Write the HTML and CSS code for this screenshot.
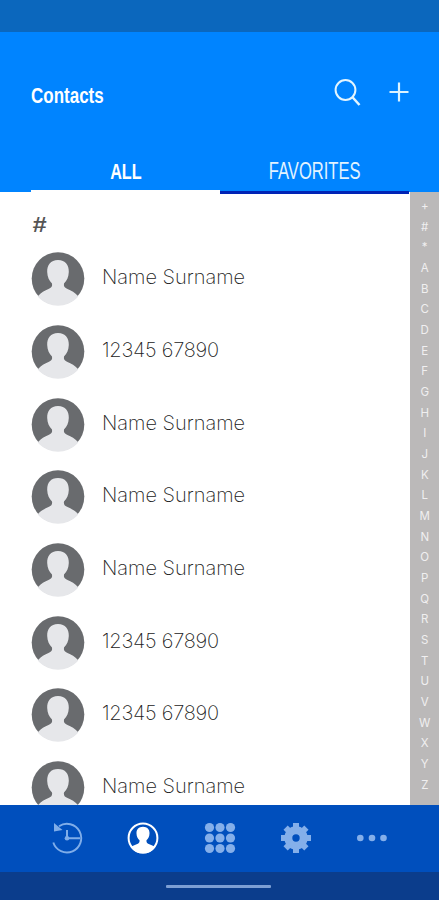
FILE: index.html
```
<!DOCTYPE html>
<html lang="en">
<head>
<meta charset="utf-8">
<title>Contacts</title>
<link rel="stylesheet" href="styles.css">
</head>
<body>
<svg class="defs" width="0" height="0" aria-hidden="true">
  <defs>
    <clipPath id="disc"><circle cx="27" cy="27" r="26.8"/></clipPath>
    <symbol id="avatar" viewBox="0 0 54 54">
      <circle cx="27" cy="26.600" r="26.300" fill="#696b6e"/>
      <path clip-path="url(#disc)" fill="#e6e7ea" d="M27 8C19.500 8 16 13 16.200 20C16.300 25 18.300 29 21 31.500C21.500 34 20.500 35.600 18 36.800C13.500 39 10 40.500 7 44L4 54H50L47 44C44 40.500 40.500 39 36 36.800C33.500 35.600 32.500 34 33 31.500C35.700 29 37.700 25 37.800 20C38 13 34.500 8 27 8Z"/>
    </symbol>
  </defs>
</svg>
<div class="app">
  <div class="status"></div>
  <header class="header">
    <div class="bar">
      <h1 class="title">Contacts</h1>
      <div class="actions">
        <svg width="28" height="28" viewBox="0 0 28 28" fill="none" stroke="#e2f5ff" stroke-width="2"><circle cx="11.500" cy="12" r="9.900"/><path d="M18.300 19L25.500 27" stroke-width="2.500"/></svg>
        <svg width="20" height="20" viewBox="0 0 20 20" fill="none" stroke="#dcf3ff" stroke-width="2.200"><path d="M10 .5V19.500M.5 10H19.500"/></svg>
      </div>
    </div>
    <nav class="tabs">
      <div class="tab tab-active"><span class="tab-label">ALL</span></div>
      <div class="tab"><span class="tab-label">FAVORITES</span></div>
    </nav>
  </header>
  <main class="main">
    <section class="list">
      <h2 class="group">#</h2>
      <div class="row"><svg class="avatar"><use href="#avatar"/></svg><span class="name">Name Surname</span></div>
      <div class="row"><svg class="avatar"><use href="#avatar"/></svg><span class="name number">12345 67890</span></div>
      <div class="row"><svg class="avatar"><use href="#avatar"/></svg><span class="name">Name Surname</span></div>
      <div class="row"><svg class="avatar"><use href="#avatar"/></svg><span class="name">Name Surname</span></div>
      <div class="row"><svg class="avatar"><use href="#avatar"/></svg><span class="name">Name Surname</span></div>
      <div class="row"><svg class="avatar"><use href="#avatar"/></svg><span class="name number">12345 67890</span></div>
      <div class="row"><svg class="avatar"><use href="#avatar"/></svg><span class="name number">12345 67890</span></div>
      <div class="row"><svg class="avatar"><use href="#avatar"/></svg><span class="name">Name Surname</span></div>
    </section>
    <aside class="index">
      <span>+</span><span>#</span><span>*</span><span>A</span><span>B</span><span>C</span><span>D</span><span>E</span><span>F</span><span>G</span><span>H</span><span>I</span><span>J</span><span>K</span><span>L</span><span>M</span><span>N</span><span>O</span><span>P</span><span>Q</span><span>R</span><span>S</span><span>T</span><span>U</span><span>V</span><span>W</span><span>X</span><span>Y</span><span>Z</span>
    </aside>
  </main>
  <nav class="dock">
    <svg class="icon" viewBox="0 0 32 32" fill="none" stroke="#7fade9" stroke-width="1.900">
      <path d="M8 4.200A14.300 14.300 0 1 1 2.300 20.500"/>
      <path d="M3 1L3 9.500L11.500 8Z" fill="#7fade9" stroke="none"/>
      <path d="M16 8V16.300H29" stroke-width="2"/><circle cx="16" cy="16.300" r="2.300" fill="#7fade9" stroke="none"/>
    </svg>
    <svg class="icon" viewBox="0 0 32 32">
      <circle cx="16" cy="16" r="14.400" fill="none" stroke="#fff" stroke-width="2"/>
      <path fill="#fff" d="M16 4.700C11.600 4.700 9.300 7.700 9.500 11.500C9.600 14.500 10.800 17 12.500 18.300C12.700 20.500 12 21.200 10.300 21.900C7.800 22.800 5.400 23.600 3.700 25.200A15 15 0 0 0 28.300 25.200C26.600 23.600 24.200 22.800 21.700 21.900C20 21.200 19.300 20.500 19.500 18.300C21.200 17 22.400 14.500 22.500 11.500C22.700 7.700 20.400 4.700 16 4.700Z"/>
    </svg>
    <svg class="icon" viewBox="0 0 32 32" fill="#84afea">
      <circle cx="5.500" cy="5.500" r="4.600"/><circle cx="16" cy="5.500" r="4.600"/><circle cx="26.500" cy="5.500" r="4.600"/>
      <circle cx="5.500" cy="16" r="4.600"/><circle cx="16" cy="16" r="4.600"/><circle cx="26.500" cy="16" r="4.600"/>
      <circle cx="5.500" cy="26.500" r="4.600"/><circle cx="16" cy="26.500" r="4.600"/><circle cx="26.500" cy="26.500" r="4.600"/>
    </svg>
    <svg class="icon" viewBox="0 0 32 32" fill="none" stroke="#84afea">
      <circle cx="16" cy="16" r="7.700" stroke-width="8"/>
      <path stroke-width="6" d="M16 1V7M16 25V31M1 16H7M25 16H31M5.600 5.600L9.600 9.600M22.400 22.400L26.400 26.400M5.600 26.400L9.600 22.400M22.400 9.600L26.400 5.600"/>
    </svg>
    <svg class="icon" viewBox="0 0 32 32" fill="#84afea"><circle cx="4.300" cy="16" r="3.300"/><circle cx="16" cy="16" r="3.300"/><circle cx="27.500" cy="16" r="3.300"/></svg>
  </nav>
  <footer class="system"><div class="handle"></div></footer>
</div>
</body>
</html>
```
FILE: styles.css
```
* { box-sizing: border-box; }
body { margin: 0; font-family: "Liberation Sans", sans-serif; }
.defs { display: block; height: 0; }
.app { width: 439px; height: 900px; display: flex; flex-direction: column; overflow: hidden; background: #fff; }
.status { height: 32px; flex: none; background: #0b67bd; }
.header { height: 160px; flex: none; background: #0084ff; color: #fff; padding-top: 46px; }
.bar { height: 34px; padding: 0 30px 0 31px; display: flex; justify-content: space-between; }
.title { margin: 0; font-size: 22.5px; line-height: 36px; transform: scaleX(.755); transform-origin: left; }
.actions { display: flex; gap: 27px; align-items: flex-start; }
.actions svg + svg { margin-top: 4px; }
.tabs { display: flex; margin: 35px 30px 0 31px; height: 47px; }
.tab { flex: 1; height: 47px; text-align: center; border-bottom: 3px solid #0023b5; font-size: 23px; line-height: 49px; color: #e2f3ff; }
.tab-active { height: 46px; border-color: #fff; color: #fff; font-weight: 700; font-size: 22.500px; }
.tab-label { display: inline-block; transform: scaleX(.72); white-space: nowrap; }
.main { height: 612.500px; flex: none; display: flex; overflow: hidden; }
.list { flex: 1; padding: 20px 0 0 31px; }
.group { margin: 0; height: 31px; padding-left: 1px; font-size: 22px; line-height: 26px; font-style: italic; font-weight: 700; color: #555; transform: scaleX(1.15); transform-origin: left; }
.row { height: 72.700px; display: flex; align-items: center; gap: 17px; }
.avatar { width: 54px; height: 54px; flex: none; }
.name { font-family: Inter, sans-serif; font-weight: 200; font-size: 20px; line-height: 24px; margin-top: -4px; color: #222; white-space: nowrap; }
.number { letter-spacing: -.25px; }
.index { width: 29.500px; background: #bbb9b9; padding: 4px 0 0 1px; display: flex; flex-direction: column; align-items: center; font-family: Inter, sans-serif; font-size: 11.500px; line-height: 20.680px; color: #f0eff0; }
.index span { height: 20.680px; flex: none; }
.dock { height: 67.500px; flex: none; background: #004fbd; display: flex; padding: 0 28.800px; }
.icon { width: 32px; height: 32px; margin: 17.500px 22.150px; flex: none; }
.system { flex: 1; background: #0b3d8c; padding-top: 12.500px; }
.handle { width: 105px; height: 3.500px; margin-left: 166px; border-radius: 1px; background: #7d9fd4; }
```
